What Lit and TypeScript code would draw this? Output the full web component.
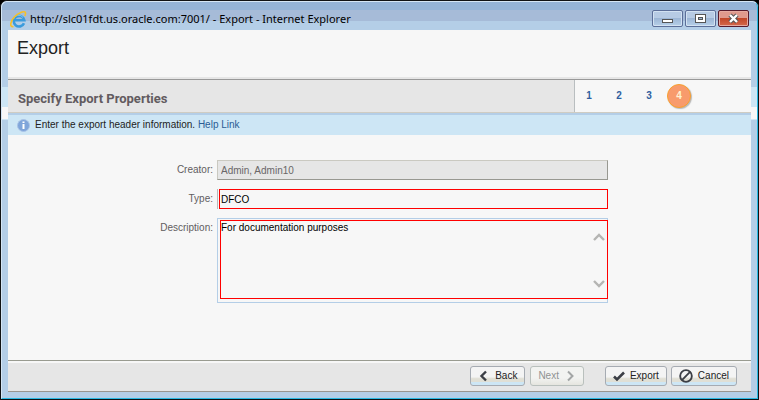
import { LitElement, html, css, svg } from "lit";
import { customElement, property } from "lit/decorators.js";
import { classMap } from "lit/directives/class-map.js";

const icons = {
  back: svg`<path d="M8 1.500 3.500 6l4.500 4.500" fill="none" stroke="#3c3f46" stroke-width="2.400"/>`,
  next: svg`<path d="M4 1.500 8.500 6l-4.500 4.500" fill="none" stroke="#a3a6a6" stroke-width="2"/>`,
  check: svg`<path d="M1 6.500 4 9.500 11 2.500" fill="none" stroke="#3c3f46" stroke-width="2.600"/>`,
  cancel: svg`<circle cx="6" cy="6" r="5" fill="none" stroke="#3c3f46" stroke-width="1.600"/><path d="M2.500 9.500 9.500 2.500" stroke="#3c3f46" stroke-width="1.600"/>`,
};

@customElement("wizard-steps")
class WizardSteps extends LitElement {
  @property({ type: Number }) current = 4;

  static styles = css`
    :host { display: block; }
    .steps { display: flex; gap: 6px; margin: 0; padding: 0; list-style: none; }
    .step {
      width: 24px; height: 24px; box-sizing: border-box; border-radius: 50%;
      font: bold 10px/24px "Liberation Sans", sans-serif; text-align: center; color: #2f5f9f;
    }
    .active {
      background: #f89b6c; border: 1px solid #f9a02c; line-height: 22px; color: #fff3d2;
      box-shadow: 1px 1px 1px #b9b9b9;
    }
  `;

  render() {
    return html`<ol class="steps">
      ${[1, 2, 3, 4].map(n => html`<li class=${classMap({ step: true, active: n === this.current })}>${n}</li>`)}
    </ol>`;
  }
}

@customElement("app-root")
class AppRoot extends LitElement {
  static styles = css`
    :host { display: block; font: 10px/12px "Liberation Sans", sans-serif; color: #222; background: #000; }
    * { box-sizing: border-box; }
    .window {
      display: flex; flex-direction: column; min-height: 100vh;
      border: 1px solid #101214; border-radius: 7px 7px 0 0; background: #b4cee7;
      overflow: hidden;
    }
    .edge {
      flex: 1; display: flex; flex-direction: column;
      border: 1px solid #d5e6f5; border-right-color: #29b9e3; border-bottom-color: #29b9e3;
      border-radius: 6px 6px 0 0;
      padding: 0 6px 6px;
      background:
        linear-gradient(#95b4d7 0 8px, transparent 8px),
        linear-gradient(#a6bbd8 0 19px, transparent 19px),
        linear-gradient(transparent 85px, #cde6f5 85px 105px, #f7f7f7 105px 117px, #cde6f5 117px 118px, transparent 118px),
        #b4cee7;
    }
    .titlebar { display: flex; align-items: center; height: 28px; padding: 6px 2px 0 2px; }
    .logo { width: 17px; height: 17px; margin-right: 3px; }
    .caption { flex: 1; margin: 0; font: 11px/18px "Noto Sans", sans-serif; color: #000; white-space: nowrap; }
    .controls { display: flex; gap: 2px; align-self: flex-start; padding-top: 2px; }
    .control {
      width: 31px; height: 17px; padding: 0; border: 1px solid #5c6f99; border-radius: 2px;
      background: linear-gradient(#b7cbe4 50%, #9db6d5 50%, #b6d0e9);
      box-shadow: inset 0 0 0 1px #d3e2f2; display: grid; place-items: center;
    }
    .close {
      border-color: #571b2c; background: linear-gradient(#e09a8d 45%, #c04426 45%, #d46a4c);
      box-shadow: inset 0 0 0 1px #e6aaa0;
    }
    .glyph { display: block; width: 13px; height: 11px; }
    .page { flex: 1; display: flex; flex-direction: column; background: #f7f7f7; }
    .heading { height: 49px; margin: 0; padding: 8px 9px; border-bottom: 2px solid #e6e6e6; font: 18px/20px "Liberation Sans", sans-serif; color: #222; }
    .subhead { display: flex; height: 34px; border-top: 1px solid #999; border-bottom: 1px solid #cfccc2; background: #e6e6e6; }
    .subtitle { flex: 1; margin: 0; padding: 10px; font: bold 13px/18px Roboto, "Liberation Sans", sans-serif; color: #625b60; }
    .wizard { width: 177px; padding: 4px 2px; border-left: 1px solid #b9bec0; background: #f7f7f7; }
    .info { display: flex; align-items: center; gap: 5px; height: 22px; padding: 0 9px; margin: 0; background: #cde6f5; border-top: 2px solid #b4cee7; }
    .infoicon { width: 13px; height: 13px; }
    .link { color: #2a5c94; text-decoration: none; }
    .form { flex: 1; display: grid; grid-template-columns: 205px minmax(0, 391px); column-gap: 4px; row-gap: 9px; align-content: start; padding-top: 25px; }
    .label { padding-top: 4px; text-align: right; color: #625d60; }
    .text { display: block; width: 100%; height: 20px; margin: 0; padding: 0 3px; border: 1px solid #cac9c1; border-right-color: #989891; border-bottom-color: #989891; border-radius: 0; font: inherit; color: #6a6768; background: #e6e6e6; outline: 0; }
    .frame { border-left: 1px solid #b9bbbb; padding-left: 1px; height: 20px; }
    .required { border: 1px solid #f00; padding: 0 1px; color: #000; background: #f7f7f7; }
    .memo { height: 85px; padding: 1px 0 3px 2px; border: 1px solid #b4cee7; }
    .area { display: flex; height: 79px; margin-right: -1px; border: 1px solid #f00; }
    .textarea { flex: 1; min-width: 0; margin: 0; padding: 1px 0; border: 0; background: transparent; font: inherit; color: #000; resize: none; outline: 0; }
    .scroll { width: 14px; display: flex; flex-direction: column; justify-content: space-between; padding: 12px 2px 10px 0; }
    .arrow { width: 12px; height: 9px; }
    .footer { display: flex; align-items: flex-start; height: 32px; gap: 4px; padding: 3px 14px 0; border-top: 1px solid #999b90; border-bottom: 1px solid #99958f; background: linear-gradient(#f7f7f7 2px, #e6e6e6 2px); justify-content: flex-end; }
    .group { display: flex; gap: 5px; margin-right: 17px; }
    .button {
      display: flex; align-items: center; gap: 5px; height: 20px; margin-top: 2px; padding: 0 7px;
      border: 1px solid #a6abb2; border-radius: 3px; background: linear-gradient(#f4f4f4 55%, #e0dfd5 65% 85%, #cde6f5 85%);
      font: inherit; color: #222; white-space: nowrap;
    }
    .button:disabled { color: #8f9291; border-color: #b9c0bd; background: linear-gradient(#f2f3f1 60%, #e5e5df); }
    .icon { width: 12px; height: 12px; }
    .large { width: 14px; height: 14px; }
  `;

  private button(label: string, icon: unknown, opts: { after?: boolean; disabled?: boolean; large?: boolean } = {}) {
    const glyph = html`<svg class=${classMap({ icon: true, large: !!opts.large })} viewBox="0 0 12 12" aria-hidden="true">${icon}</svg>`;
    return html`<button class="button" type="button" ?disabled=${opts.disabled ?? false}>
      ${opts.after ? html`<span>${label}</span>${glyph}` : html`${glyph}<span>${label}</span>`}
    </button>`;
  }

  render() {
    return html`
      <div class="window"><div class="edge">
        <header class="titlebar">
          <svg class="logo" viewBox="0 0 17 17" aria-hidden="true">
            <path d="M14 12.200A5.300 5.300 0 1 1 14.300 9.300H5" fill="none" stroke="#3a9bdc" stroke-width="2.600"/>
            <path d="M3.500 8A5.300 5.300 0 0 1 13 6.500" fill="none" stroke="#7cc8f2" stroke-width="1"/>
            <path d="M3.500 15.500C-1 16.500.5 10 4.500 5.800 8.500 1.500 15 -.8 15.500 2 15.600 3 15.300 4 14.800 5" fill="none" stroke="#f5c02a" stroke-width="1.600"/>
          </svg>
          <p class="caption">http://slc01fdt.us.oracle.com:7001/ - Export - Internet Explorer</p>
          <div class="controls">
            <button class="control" type="button" aria-label="Minimize"><svg class="glyph" viewBox="0 0 13 11"><rect x="1.500" y="6.500" width="10" height="3" fill="#fff" stroke="#555"/></svg></button>
            <button class="control" type="button" aria-label="Maximize"><svg class="glyph" viewBox="0 0 13 11"><rect x="1.500" y="1.500" width="10" height="8" fill="#fff" stroke="#555"/><rect x="4.500" y="4.500" width="4" height="2" fill="#9db6d5" stroke="#555"/></svg></button>
            <button class="control close" type="button" aria-label="Close"><svg class="glyph" viewBox="0 0 13 11"><path d="m3 2 7 7m0-7-7 7" stroke="#555" stroke-width="4.400"/><path d="m3 2 7 7m0-7-7 7" stroke="#fff" stroke-width="2.400"/></svg></button>
          </div>
        </header>
        <main class="page">
          <h1 class="heading">Export</h1>
          <div class="subhead">
            <h2 class="subtitle">Specify Export Properties</h2>
            <wizard-steps class="wizard" .current=${4}></wizard-steps>
          </div>
          <p class="info">
            <svg class="infoicon" viewBox="0 0 13 13" aria-hidden="true"><circle cx="6.500" cy="6.500" r="6" fill="#7fa5da" stroke="#a9c3e6"/><path d="M5.500 5h2v5h-2zM5.500 2.500h2v1.500h-2z" fill="#fff"/></svg>
            <span>Enter the export header information. <a class="link" href="#help">Help Link</a></span>
          </p>
          <form class="form">
            <label class="label" for="creator">Creator:</label>
            <input class="text" id="creator" value="Admin, Admin10" readonly>
            <label class="label" for="type">Type:</label>
            <div class="frame"><input class="text required" id="type" value="DFCO"></div>
            <label class="label" for="description">Description:</label>
            <div class="memo"><div class="area">
              <textarea class="textarea" id="description" .value=${"For documentation purposes"}></textarea>
              <div class="scroll" aria-hidden="true">
                <svg class="arrow" viewBox="0 0 12 9"><path d="m1 7 5-5 5 5" fill="none" stroke="#b5b5b3" stroke-width="2.400"/></svg>
                <svg class="arrow" viewBox="0 0 12 9"><path d="m1 2 5 5 5-5" fill="none" stroke="#b5b5b3" stroke-width="2.400"/></svg>
              </div>
            </div></div>
          </form>
          <footer class="footer">
            <div class="group">
              ${this.button("Back", icons.back)}
              ${this.button("Next", icons.next, { after: true, disabled: true })}
            </div>
            ${this.button("Export", icons.check)}
            ${this.button("Cancel", icons.cancel, { large: true })}
          </footer>
        </main>
      </div></div>
    `;
  }
}
